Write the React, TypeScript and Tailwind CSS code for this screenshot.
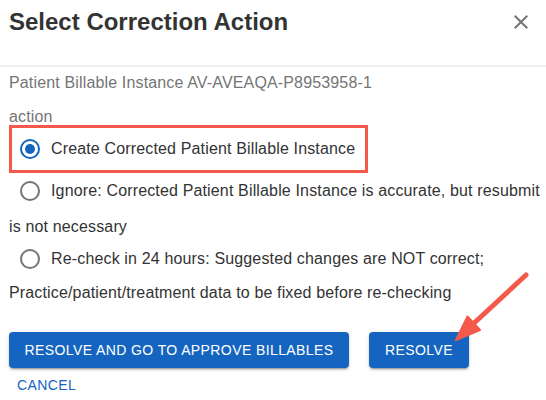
import React, { useState } from 'react';

function Radio({ checked }: { checked: boolean }) {
  const color = checked ? '#1565c0' : '#757575';
  return (
    <svg width="22" height="22" viewBox="0 0 22 22" className="shrink-0">
      <circle cx="11" cy="11" r="9" fill="none" stroke={color} strokeWidth="2" />
      {checked && <circle cx="11" cy="11" r="5" fill={color} />}
    </svg>
  );
}

export default function App() {
  const [value, setValue] = useState('create');

  return (
    <div
      className="relative w-[546px] h-[400px] overflow-hidden bg-white"
      style={{ fontFamily: '"Liberation Sans", Arial, sans-serif' }}
    >
      {/* header */}
      <div className="flex h-[65px] items-start justify-between pl-[9px] pt-[6px]">
        <h2 className="text-[24px] leading-8 font-bold text-[#333333]">Select Correction Action</h2>
        <button className="mr-[13px] mt-[4px] text-[#757575]">
          <svg width="24" height="24" viewBox="0 0 24 24" fill="currentColor">
            <path d="M19 6.41 17.59 5 12 10.59 6.41 5 5 6.41 10.59 12 5 17.59 6.41 19 12 13.41 17.59 19 19 17.59 13.41 12z" />
          </svg>
        </button>
      </div>
      <div className="h-[2px] bg-[#eeeeee]" />

      {/* body */}
      <div className="px-[9px] text-[16px] tracking-[0.15px] text-[#333333]">
        <div className="mt-[4px] leading-6 text-[#757575]">Patient Billable Instance AV-AVEAQA-P8953958-1</div>
        <div className="mt-[14px] h-[16px] leading-4 text-[#757575]">action</div>

        <label
          className="flex h-[48px] w-[359px] cursor-pointer items-center border-[3px] border-[#f4594b] pl-[7px]"
          onClick={() => setValue('create')}
        >
          <Radio checked={value === 'create'} />
          <span className="ml-[10px]">Create Corrected Patient Billable Instance</span>
        </label>

        <div className="cursor-pointer" onClick={() => setValue('ignore')}>
          <div className="flex h-[36px] items-center pl-[10px]">
            <Radio checked={value === 'ignore'} />
            <span className="ml-[10px] whitespace-nowrap">
              Ignore: Corrected Patient Billable Instance is accurate, but resubmit
            </span>
          </div>
          <div className="flex h-[36px] items-center">is not necessary</div>
        </div>

        <div className="cursor-pointer" onClick={() => setValue('recheck')}>
          <div className="flex h-[28px] items-center pl-[10px]">
            <Radio checked={value === 'recheck'} />
            <span className="ml-[10px] whitespace-nowrap">
              Re-check in 24 hours: Suggested changes are NOT correct;
            </span>
          </div>
          <div className="flex h-[40px] items-center">
            Practice/patient/treatment data to be fixed before re-checking
          </div>
        </div>

        {/* actions */}
        <div className="mt-[19px] flex gap-[20px]">
          <button className="h-[36px] w-[340px] rounded bg-[#1565c0] text-[14px] tracking-[0.4px] text-white shadow-[0_3px_1px_-2px_rgba(0,0,0,0.2),0_2px_2px_0_rgba(0,0,0,0.14),0_1px_5px_0_rgba(0,0,0,0.12)]">
            RESOLVE AND GO TO APPROVE BILLABLES
          </button>
          <button className="h-[36px] w-[100px] rounded bg-[#1565c0] text-[14px] tracking-[0.4px] text-white shadow-[0_3px_1px_-2px_rgba(0,0,0,0.2),0_2px_2px_0_rgba(0,0,0,0.14),0_1px_5px_0_rgba(0,0,0,0.12)]">
            RESOLVE
          </button>
        </div>
        <button className="mt-[7px] ml-[8px] h-[20px] text-[14px] leading-5 tracking-[0.4px] text-[#1565c0]">
          CANCEL
        </button>
      </div>

      {/* annotation arrow */}
      <svg className="pointer-events-none absolute left-0 top-0" width="546" height="400" viewBox="0 0 546 400">
        <line x1="526" y1="275" x2="472" y2="325" stroke="#f4594b" strokeWidth="5" strokeLinecap="round" />
        <path d="M456 340 L467.5 316.5 L480 330 Z" fill="#f4594b" stroke="#f4594b" strokeWidth="2" strokeLinejoin="round" />
      </svg>
    </div>
  );
}
